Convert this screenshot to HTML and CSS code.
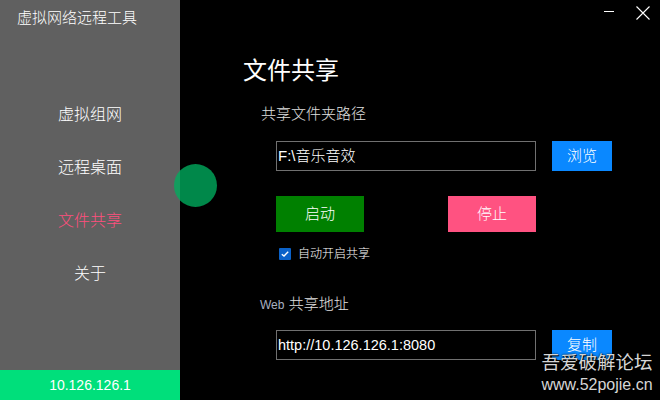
FILE: index.html
```html
<!DOCTYPE html>
<html lang="zh-CN">
<head>
<meta charset="utf-8">
<title>虚拟网络远程工具</title>
<link rel="stylesheet" href="styles.css">
</head>
<body>
<div class="app">
  <aside class="sidebar">
    <div class="brand">虚拟网络远程工具</div>
    <nav class="nav">
      <div class="nav-item">虚拟组网</div>
      <div class="nav-item">远程桌面</div>
      <div class="nav-item active">文件共享</div>
      <div class="nav-item">关于</div>
    </nav>
    <div class="ip-bar">10.126.126.1</div>
  </aside>
  <main class="main">
    <div class="titlebar">
      <div class="win-btn"><svg width="10" height="10" viewBox="0 0 10 10"><rect x="0" y="5" width="10" height="1" fill="#fff"/></svg></div>
      <div class="win-btn"><svg width="14" height="14" viewBox="0 0 14 14"><path d="M0.5 0.5L13.5 13.5M13.5 0.5L0.5 13.5" stroke="#fff" stroke-width="1.1" fill="none"/></svg></div>
    </div>
    <h1 class="heading">文件共享</h1>
    <div class="label">共享文件夹路径</div>
    <div class="row">
      <div class="field">F:\音乐音效</div>
      <div class="btn btn-blue">浏览</div>
    </div>
    <div class="actions">
      <div class="btn btn-big btn-green">启动</div>
      <div class="btn btn-big btn-pink">停止</div>
    </div>
    <label class="check">
      <span class="box"><svg width="8" height="6" viewBox="0 0 8 6"><path d="M0.8 3.2L3 5L7.2 0.8" stroke="#fff" stroke-width="1.4" fill="none"/></svg></span>
      <span class="check-text">自动开启共享</span>
    </label>
    <div class="label label-web"><span class="web">Web</span> 共享地址</div>
    <div class="row row-web">
      <div class="field field-url">http://10.126.126.1:8080</div>
      <div class="btn btn-blue">复制</div>
    </div>
  </main>
  <div class="knob"></div>
  <div class="watermark">
    <div class="wm-cn">吾爱破解论坛</div>
    <div class="wm-en">www.52pojie.cn</div>
  </div>
</div>
</body>
</html>
```

FILE: styles.css
```css
* { box-sizing: border-box; margin: 0; padding: 0; }
html, body { width: 660px; height: 400px; background: #000; overflow: hidden; }
body {
  font-family: "Liberation Sans", "Noto Sans CJK SC", sans-serif;
  font-weight: 300;
  color: #fff;
}
.app {
  position: relative;
  display: flex;
  width: 660px;
  height: 400px;
  background: #000;
}
.sidebar {
  width: 180px;
  height: 400px;
  background: #606060;
  display: flex;
  flex-direction: column;
}
.brand {
  height: 36px;
  line-height: 36px;
  padding-left: 17px;
  font-size: 15px;
  color: #fff;
}
.nav {
  margin-top: 52px;
  flex: 1;
}
.nav-item {
  height: 53px;
  line-height: 53px;
  text-align: center;
  font-size: 16px;
  color: #fff;
}
.nav-item.active { color: #ff4f7e; }
.ip-bar {
  height: 30px;
  line-height: 30px;
  background: #00df7b;
  text-align: center;
  font-size: 14px;
  font-weight: 400;
  color: #fff;
}
.main {
  flex: 1;
  display: flex;
  flex-direction: column;
  padding-left: 63px;
}
.titlebar {
  align-self: flex-end;
  display: flex;
  height: 26px;
}
.win-btn {
  width: 34px;
  height: 26px;
  display: flex;
  align-items: center;
  justify-content: center;
}
.win-btn:first-child svg { margin-top: -4px; }
.heading {
  margin-top: 30px;
  height: 30px;
  line-height: 30px;
  font-size: 24px;
  font-weight: 400;
  color: #fff;
}
.label {
  margin-top: 18px;
  margin-left: 18px;
  height: 20px;
  line-height: 20px;
  font-size: 15px;
  color: #e0e0e0;
}
.row {
  margin-top: 17px;
  margin-left: 33px;
  display: flex;
  gap: 16px;
}
.field {
  width: 260px;
  height: 30px;
  border: 1px solid #707070;
  line-height: 28px;
  padding-left: 1px;
  font-size: 15px;
  color: #fff;
}
.field-url { font-size: 14.5px; font-weight: 400; }
.btn {
  width: 60px;
  height: 30px;
  line-height: 30px;
  text-align: center;
  font-size: 15px;
  color: #fff;
}
.btn-blue { background: #0a88ff; }
.actions {
  margin-top: 25px;
  margin-left: 33px;
  width: 260px;
  display: flex;
  justify-content: space-between;
}
.btn-big { width: 88px; height: 36px; line-height: 36px; }
.btn-green { background: #008000; }
.btn-pink { background: #ff5281; }
.check {
  margin-top: 14px;
  margin-left: 36px;
  height: 16px;
  display: flex;
  align-items: center;
  gap: 7px;
}
.box {
  width: 12px;
  height: 12px;
  background: #0b62c9;
  border-radius: 1px;
  display: flex;
  align-items: center;
  justify-content: center;
}
.check-text { font-size: 12px; line-height: 16px; color: #fff; }
.label-web { margin-top: 32px; margin-left: 17px; }
.web { font-size: 12px; font-weight: 400; color: #a8b0c0; }
.row-web { margin-top: 16px; }
.knob {
  position: absolute;
  left: 174px;
  top: 164px;
  width: 43px;
  height: 43px;
  border-radius: 50%;
  background: rgba(0, 172, 94, 0.79);
}
.watermark {
  position: absolute;
  left: 538px;
  top: 350px;
  width: 118px;
  text-align: center;
  color: #d6d6d6;
  font-weight: 400;
  text-shadow: 0 0 2px #000, 1px 1px 1px #000;
}
.wm-cn { font-size: 18.5px; line-height: 26px; }
.wm-en { font-size: 16px; line-height: 18px; }
```
